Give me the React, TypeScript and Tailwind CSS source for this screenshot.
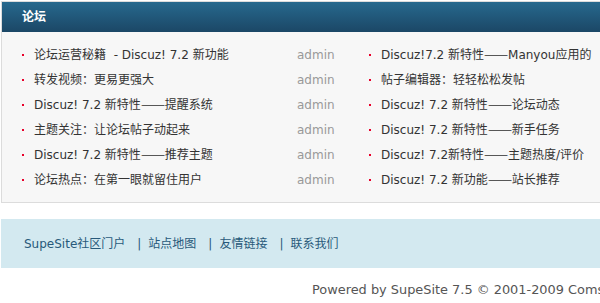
const left = [
  "论坛运营秘籍  - Discuz! 7.2 新功能",
  "转发视频：更易更强大",
  "Discuz! 7.2 新特性——提醒系统",
  "主题关注：让论坛帖子动起来",
  "Discuz! 7.2 新特性——推荐主题",
  "论坛热点：在第一眼就留住用户",
];

const right = [
  "Discuz!7.2 新特性——Manyou应用的",
  "帖子编辑器：轻轻松松发帖",
  "Discuz! 7.2 新特性——论坛动态",
  "Discuz! 7.2 新特性——新手任务",
  "Discuz! 7.2新特性——主题热度/评价",
  "Discuz! 7.2 新功能——站长推荐",
];

const font = "font-['DejaVu_Sans','Noto_Sans_CJK_SC',sans-serif]";

// dashes come out narrow, stretch them to full CJK width
function withDashes(text: string) {
  const parts = text.split("——");
  return parts.map((p, i) => (
    <span key={i}>
      {p}
      {i < parts.length - 1 && (
        <span className="inline-block w-[24px]">
          <span className="inline-block origin-left scale-x-[1.2] font-['Noto_Sans_CJK_SC',sans-serif]">——</span>
        </span>
      )}
    </span>
  ));
}

function Item({ title, author }: { title: string; author?: string }) {
  return (
    <li className="flex h-[25px] items-center">
      <span className="mr-[10px] h-[2px] w-[2px] shrink-0 bg-[#e8002a]" />
      <span className="w-[263px] shrink-0 whitespace-pre text-[#333]">{withDashes(title)}</span>
      {author && <span className="w-[72px] shrink-0 text-[#999]">{author}</span>}
    </li>
  );
}

export default function App() {
  return (
    <div className={`w-[600px] h-[303px] overflow-hidden bg-white text-[12px] leading-[16px] ${font}`}>
      <div className="ml-px mt-px w-[640px] border border-[#dcdcdc]">
        <div className="flex h-[30px] items-center bg-gradient-to-b from-[#27698e] to-[#1b4766] pl-[20px] font-bold text-white">
          论坛
        </div>
        <div className="flex bg-[#f7f7f7] pl-[20px] pt-[10px] pb-[10px]">
          <ul className="w-[347px] shrink-0">
            {left.map((t) => (
              <Item key={t} title={t} author="admin" />
            ))}
          </ul>
          <ul className="shrink-0 whitespace-nowrap">
            {right.map((t) => (
              <Item key={t} title={t} />
            ))}
          </ul>
        </div>
      </div>
      <div className="ml-px mt-[16px] flex h-[49px] items-center bg-[#d3e9f0] pl-[23px] text-[#28597a] whitespace-pre">
        <span>SupeSite社区门户</span>
        <span className="pl-[12px] pr-[7px]">|</span>
        <span>站点地图</span>
        <span className="pl-[12px] pr-[7px]">|</span>
        <span>友情链接</span>
        <span className="pl-[12px] pr-[7px]">|</span>
        <span>联系我们</span>
      </div>
      <div className="whitespace-nowrap pt-[14px] pl-[312px] text-[12.9px] text-[#555]">
        Powered by SupeSite 7.5 © 2001-2009 Comsenz Inc.
      </div>
    </div>
  );
}
